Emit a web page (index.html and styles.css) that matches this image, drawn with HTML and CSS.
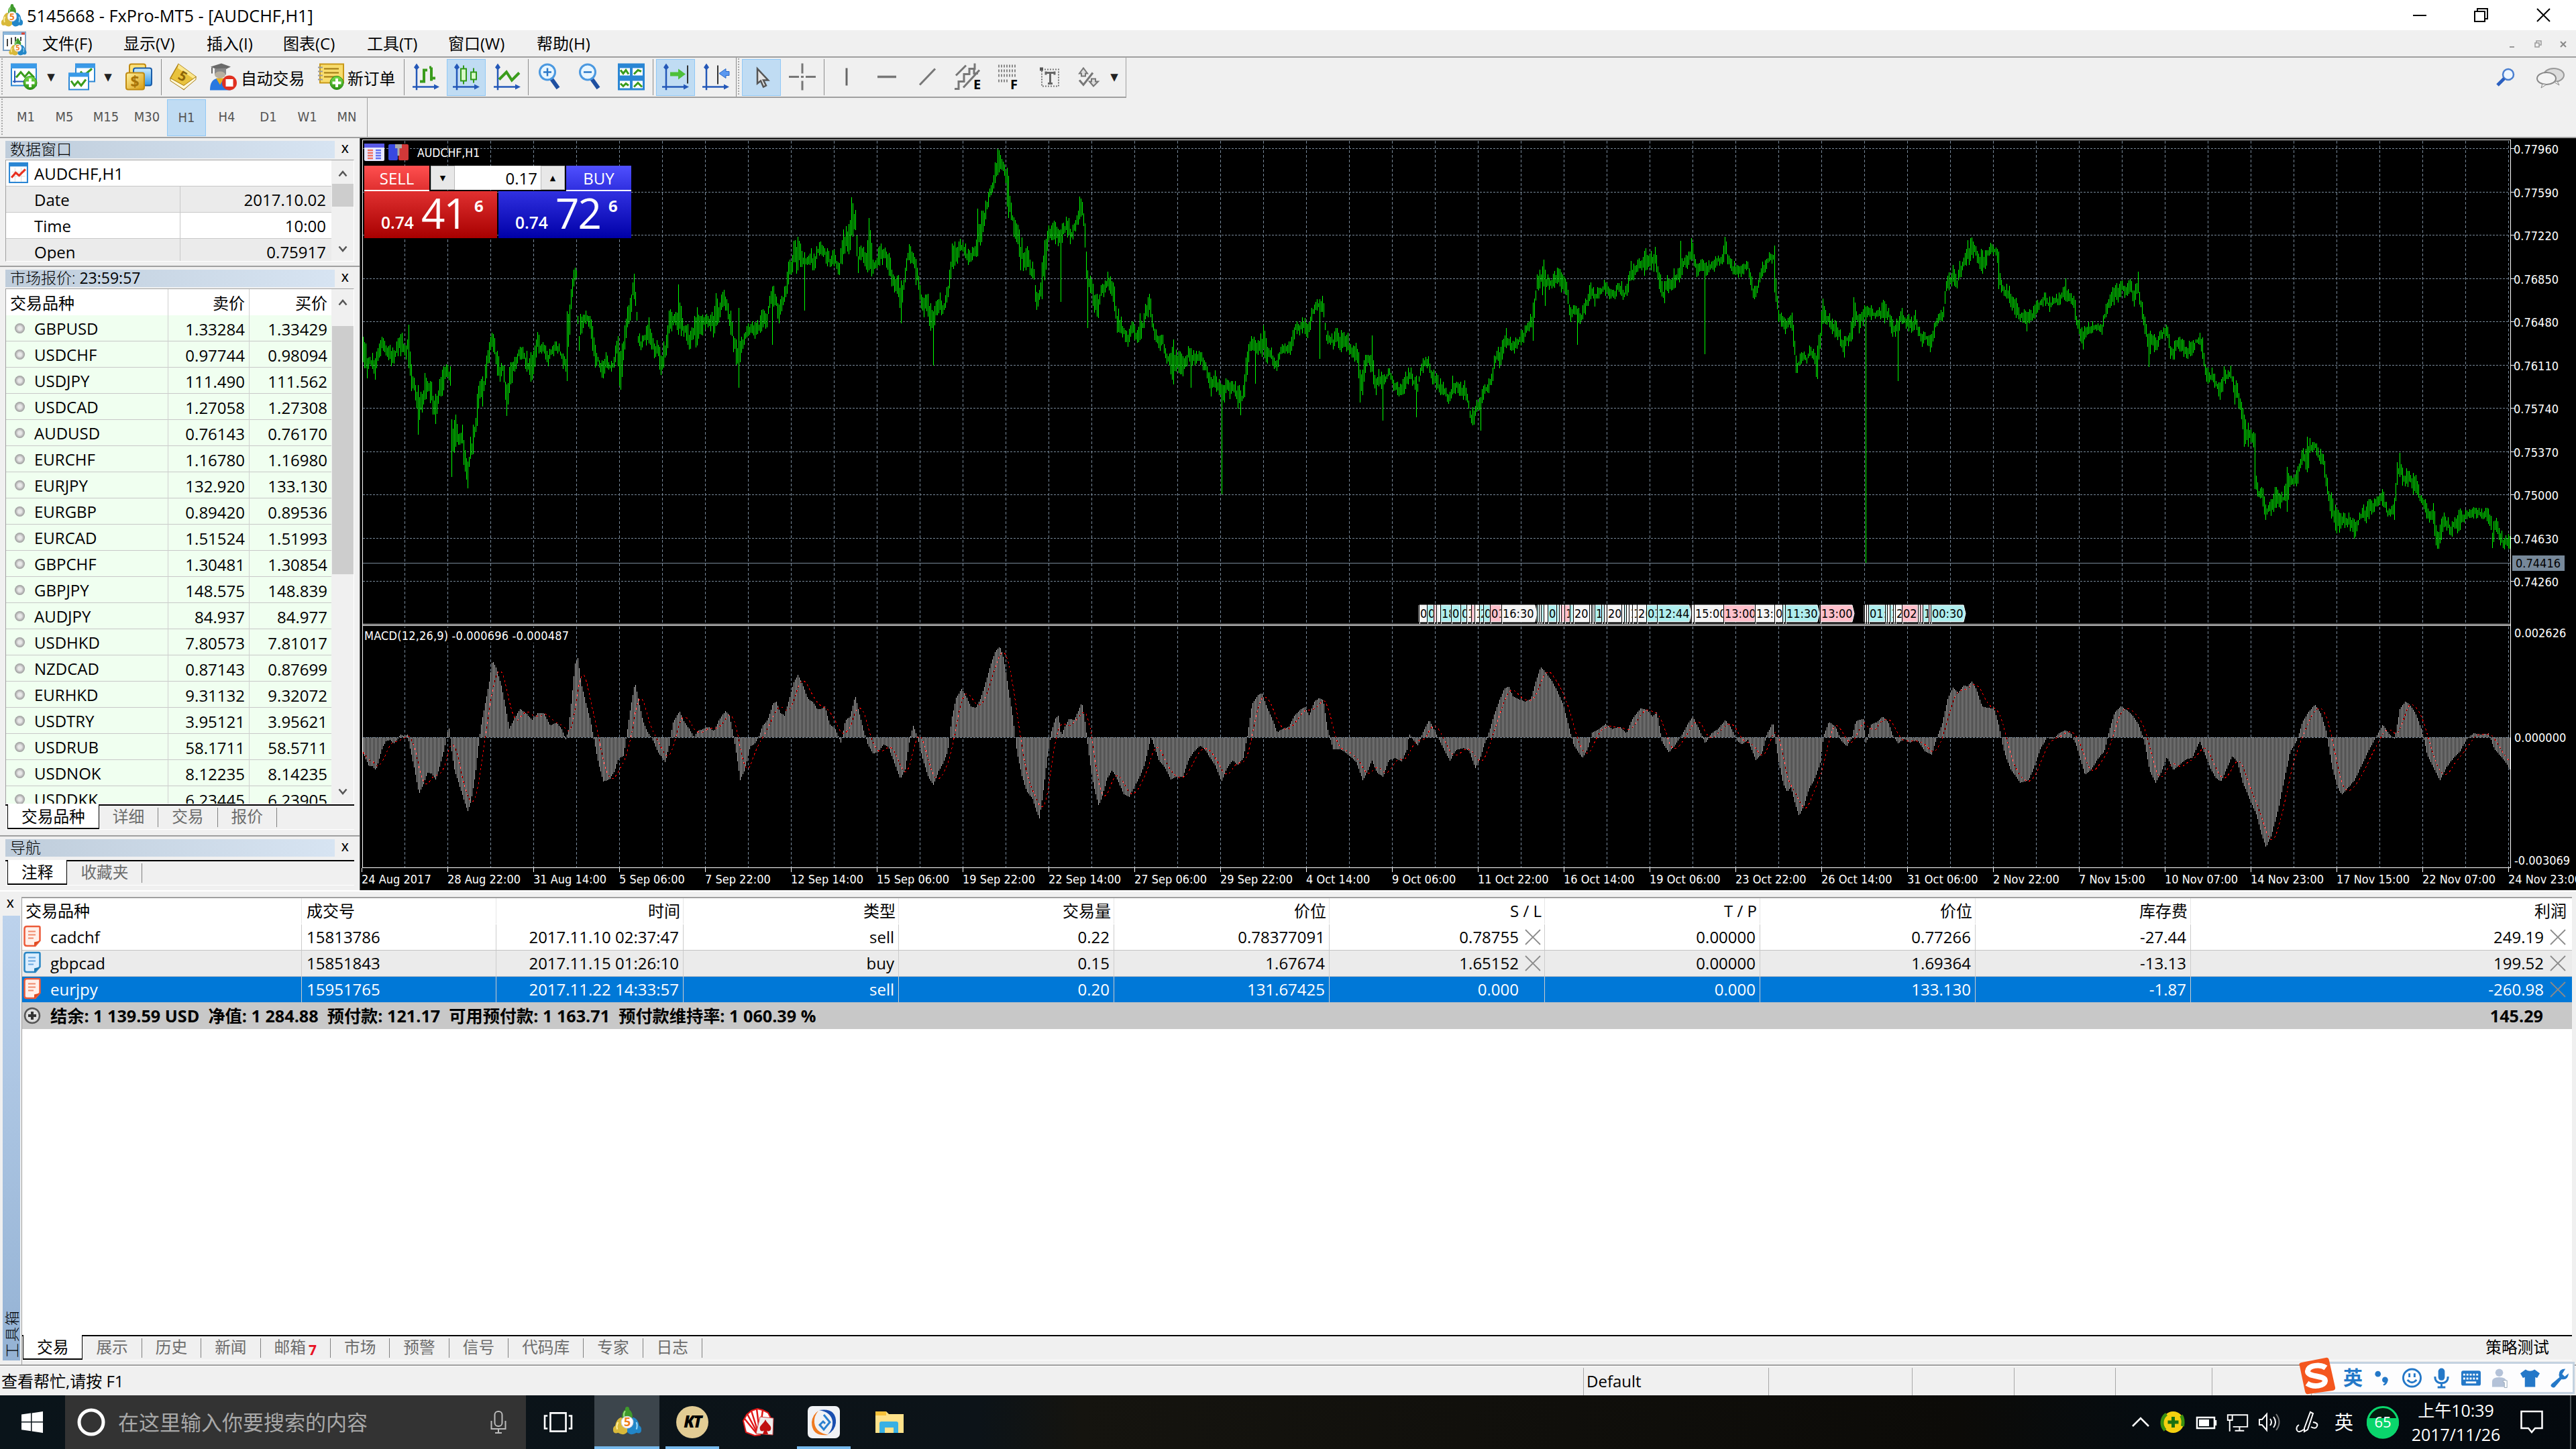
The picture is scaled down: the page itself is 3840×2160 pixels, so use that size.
FILE: index.html
```html
<!DOCTYPE html>
<html lang="zh-CN">
<head>
<meta charset="utf-8">
<title>5145668 - FxPro-MT5 - [AUDCHF,H1]</title>
<link rel="stylesheet" href="styles.css">
</head>
<body>
<svg class="defs" width="0" height="0">
  <defs>
    <linearGradient id="gGold" x1="0" y1="0" x2="1" y2="1"><stop offset="0" stop-color="#fff3a0"/><stop offset="1" stop-color="#d89a10"/></linearGradient>
    <linearGradient id="gGreen" x1="0" y1="0" x2="0" y2="1"><stop offset="0" stop-color="#7be04a"/><stop offset="1" stop-color="#2a8f12"/></linearGradient>
    <linearGradient id="gBlue" x1="0" y1="0" x2="0" y2="1"><stop offset="0" stop-color="#cfeeff"/><stop offset="1" stop-color="#2f96e8"/></linearGradient>
    <symbol id="mt5" viewBox="0 0 40 40">
      <path d="M17 4q0-4 3-4t3 4q6 5 4 13H13Q11 9 17 4z" fill="#3f9a2c"/>
      <path d="M17 6q-3 5-1 9" stroke="#9ade7c" stroke-width="2" fill="none"/>
      <path d="M11 15q-7 3-8 12-4 2-3 7t7 3q8 5 13-1V20z" fill="#d9b93a"/>
      <path d="M7 22q-3 5-1 10" stroke="#fff0a0" stroke-width="2" fill="none"/>
      <path d="M29 15q7 3 8 12 4 2 3 7t-7 3q-8 5-13-1V20z" fill="#2286c8"/>
      <path d="M33 22q2 5 0 10" stroke="#9ad8f8" stroke-width="2" fill="none"/>
      <circle cx="20" cy="22" r="8.500" fill="#fff" stroke="#ccd" stroke-width="1"/>
      <text x="20" y="28" font-size="17" font-weight="700" text-anchor="middle" fill="#f08020">5</text>
    </symbol>
    <symbol id="plus" viewBox="0 0 22 22"><circle cx="11" cy="11" r="10" fill="url(#gGreen)" stroke="#2b8a18"/><path d="M11 4.500v13M4.500 11h13" stroke="#fff" stroke-width="4"/></symbol>
    <symbol id="axes" viewBox="0 0 40 40"><path d="M6 3v37M0 35h36" stroke="#2458b8" stroke-width="2.500" fill="none"/><path d="M6 0l4 6-4 4-4-4zM40 35l-8-4v8z" fill="#2458b8"/></symbol>
    <symbol id="sellDoc" viewBox="0 0 26 32"><path d="M5 1.500h18q1.500 0 1.500 2v19l-7 8H5q-3.500 0-3.500-3V5q0-3.500 3.500-3.500z" fill="#fff0ea" stroke="#ec5b3a" stroke-width="2.500"/><path d="M7 9h11M7 14h11M7 19h8" stroke="#f08a6c" stroke-width="2.200"/><path d="M24 23l-8 8v-6z" fill="#e04a20"/></symbol>
    <symbol id="buyDoc" viewBox="0 0 26 32"><path d="M5 1.500h18q1.500 0 1.500 2v19l-7 8H5q-3.500 0-3.500-3V5q0-3.500 3.500-3.500z" fill="#dceeff" stroke="#2a86c4" stroke-width="2.500"/><path d="M7 9h11M7 14h11M7 19h8" stroke="#6aa8e0" stroke-width="2.200"/><path d="M24 23l-8 8v-6z" fill="#1a78b0"/></symbol>
    <symbol id="cross" viewBox="0 0 26 26"><path d="M2 2l22 22M24 2L2 24" stroke="#8a8a8a" stroke-width="1.800"/></symbol>
    <symbol id="up" viewBox="0 0 14 10"><path d="M1.500 8.500L7 2l5.500 6.500" fill="none" stroke="#555" stroke-width="2.500"/></symbol>
    <symbol id="down" viewBox="0 0 14 10"><path d="M1.500 1.500L7 8l5.500-6.500" fill="none" stroke="#555" stroke-width="2.500"/></symbol>
  </defs>
</svg>

<header class="titlebar">
  <svg class="app-icon" viewBox="0 0 40 40" preserveAspectRatio="none"><use href="#mt5"/></svg>
  <span class="title">5145668 - FxPro-MT5 - [AUDCHF,H1]</span>
  <div class="winbtns">
    <svg viewBox="0 0 92 44"><path d="M36 22h20" stroke="#000" stroke-width="2"/></svg>
    <svg viewBox="0 0 92 44"><path d="M36 16h15v15H36zM40 16v-4h15v15h-4" fill="none" stroke="#000" stroke-width="2"/></svg>
    <svg viewBox="0 0 92 44"><path d="M37 12l19 19M56 12L37 31" stroke="#000" stroke-width="2"/></svg>
  </div>
</header>

<nav class="menubar">
  <svg class="mdi-icon" viewBox="0 0 36 36"><rect x="1" y="1" width="33" height="27" fill="#fff" stroke="#7aa0c4" stroke-width="2"/><path d="M1 3h33" stroke="#8db8dc" stroke-width="4"/><path d="M28 3h5" stroke="#e04030" stroke-width="3"/><path d="M7 22V11m6 8V9m6 6V8m8 6V8" stroke="#444" stroke-width="2"/><use href="#mt5" x="9" y="10" width="27" height="26"/></svg>
  <span style="width:121px">文件(F)</span><span style="width:124px">显示(V)</span><span style="width:114px">插入(I)</span><span style="width:125px">图表(C)</span><span style="width:121px">工具(T)</span><span style="width:132px">窗口(W)</span><span>帮助(H)</span>
  <div class="mdibtns"><svg viewBox="0 0 38 38"><path d="M15 24h7" stroke="#999" stroke-width="2"/></svg><svg viewBox="0 0 38 38"><path d="M15 18h6v6h-6zM17 18v-3h7v6h-3" fill="none" stroke="#999" stroke-width="1.500"/></svg><svg viewBox="0 0 38 38"><path d="M15 16l8 8M23 16l-8 8" stroke="#888" stroke-width="2"/></svg></div>
</nav>

<div class="toolbar">
  <div class="tools">
    <i class="grip"></i>
    <b style="width:56px"><svg viewBox="0 0 40 40"><rect x="1" y="1" width="37" height="32" fill="#fff" stroke="#2a86d4" stroke-width="2"/><path d="M0 4h39" stroke="#3a9ae8" stroke-width="7"/><path d="M6 11v18M3 27h20" stroke="#2458b8" stroke-width="2"/><path d="M8 21l7-8 6 7 6-7 8 8" fill="none" stroke="#3a9c1c" stroke-width="3"/><use href="#plus" x="18" y="18" width="22" height="22"/></svg></b>
    <b class="caret" style="width:24px">▼</b>
    <b style="width:68px"><svg viewBox="0 0 40 40"><rect x="11" y="1" width="28" height="26" fill="#fff" stroke="#2a86d4" stroke-width="2"/><path d="M10 4h30" stroke="#3a9ae8" stroke-width="6"/><path d="M18 12l5 6 12-10" fill="none" stroke="#3a9c1c" stroke-width="3"/><rect x="1" y="15" width="29" height="24" fill="#fff" stroke="#2a86d4" stroke-width="2"/><path d="M0 17h31" stroke="#3a9ae8" stroke-width="6"/><path d="M4 26l5 7 5-6 5 6 7-9" fill="none" stroke="#3a9c1c" stroke-width="3"/></svg></b>
    <b class="caret" style="width:10px">▼</b>
    <b class="money"><svg viewBox="0 0 40 40"><rect x="6" y="1" width="24" height="30" rx="3" fill="#ffe27a" stroke="#c08a10" stroke-width="2"/><rect x="12" y="7" width="27" height="26" rx="3" fill="url(#gBlue)" stroke="#1a5ca8" stroke-width="2"/><rect x="1" y="14" width="27" height="25" rx="3" fill="url(#gGold)" stroke="#c08a10" stroke-width="2"/><text x="14" y="35" font-size="23" font-weight="700" fill="#a87408" text-anchor="middle">$</text></svg></b>
    <i class="sep"></i>
    <b style="width:64px"><svg viewBox="0 0 40 40"><path d="M13 1l26 19-18 19L1 22z" fill="#e8c23c" stroke="#a87c10" stroke-width="1.500"/><path d="M13 1l26 19-2 4L12 7z" fill="#fbe68c"/><path d="M1 22l20 11 18-13v4L21 39 1 26z" fill="#fff8d8" stroke="#a87c10"/><text x="19" y="26" font-size="20" font-weight="700" fill="#8c6408" text-anchor="middle" transform="rotate(30 19 20)">5</text></svg></b>
    <b style="width:56px"><svg viewBox="0 0 40 40"><path d="M1 5L17 0l14 5-14 7z" fill="#6a6a6a"/><path d="M7 8v9h17V7" fill="#888"/><path d="M3 6v9" stroke="#666" stroke-width="2"/><ellipse cx="15" cy="17" rx="8" ry="5" fill="#b8b0a0"/><path d="M0 40q0-18 14-18t17 18z" fill="#2878e0"/><path d="M9 22l6 10 6-10z" fill="#e8b020"/><circle cx="29" cy="29" r="11" fill="#e03020"/><rect x="23.500" y="23.500" width="11" height="11" fill="#fff"/></svg></b>
    <b class="lbl auto">自动交易</b>
    <b style="width:50px"><svg viewBox="0 0 40 40"><rect x="4" y="1" width="35" height="28" fill="#f8dc6c" stroke="#c89818" stroke-width="2"/><path d="M10 8h22M10 14h22M10 20h22" stroke="#a07810" stroke-width="2"/><path d="M1 6h7M1 12h7M1 18h7M1 24h7" stroke="#999" stroke-width="2"/><use href="#plus" x="18" y="18" width="22" height="22"/></svg></b>
    <b class="lbl" style="width:84px">新订单</b>
    <i class="sep"></i>
    <b style="width:63px"><svg viewBox="0 0 40 40"><use href="#axes"/><path d="M11 27h6V10h5M28 6v20M28 6h-3m3 16h6" stroke="#3a9c1c" stroke-width="4" fill="none"/></svg></b>
    <b class="on"><svg viewBox="0 0 40 40"><use href="#axes"/><path d="M16 3v28M31 7v22" stroke="#2f9818" stroke-width="2"/><rect x="12" y="8" width="8" height="18" fill="#d8f8c8" stroke="#2f9818" stroke-width="2"/><rect x="27" y="13" width="8" height="11" fill="#d8f8c8" stroke="#2f9818" stroke-width="2"/></svg></b>
    <b style="width:63px"><svg viewBox="0 0 40 40"><use href="#axes"/><path d="M8 24l11-11 8 12 11-11" fill="none" stroke="#3a9c1c" stroke-width="4"/></svg></b>
    <i class="sep"></i>
    <b style="width:63px"><svg viewBox="0 0 40 40"><path d="M22 23l10 14" stroke="#1f4fa0" stroke-width="6"/><circle cx="16" cy="13" r="11.500" fill="#e8f6ff" stroke="#4a98e0" stroke-width="3"/><path d="M16 7v12M10 13h12" stroke="#2a78c8" stroke-width="2.500"/></svg></b>
    <b style="width:58px"><svg viewBox="0 0 40 40"><path d="M22 23l10 14" stroke="#1f4fa0" stroke-width="6"/><circle cx="16" cy="13" r="11.500" fill="#e8f6ff" stroke="#4a98e0" stroke-width="3"/><path d="M10 13h12" stroke="#2a78c8" stroke-width="2.500"/></svg></b>
    <b style="width:64px"><svg viewBox="0 0 40 40"><path d="M0 0h40v40H0z" fill="#2a86d4"/><path d="M3 7h15v11H3zM22 7h15v11H22zM3 26h15v11H3zM22 26h15v11H22z" fill="#fff"/><path d="M4 10l4 5 4-5 4 6M24 16l6-6 5 2M4 30l4 4 4-4 4 3M24 35l6-6 6 6" fill="none" stroke="#3a9c1c" stroke-width="3"/></svg></b>
    <i class="sep"></i>
    <b class="on shift"><svg viewBox="0 0 40 40"><use href="#axes"/><path d="M38 3v27" stroke="#333" stroke-width="2"/><path d="M12 13h12V8l11 8-11 8v-5H12z" fill="#4ec03a"/></svg></b>
    <b style="width:61px"><svg viewBox="0 0 40 40"><use href="#axes"/><path d="M23 3v28" stroke="#333" stroke-width="2"/><path d="M40 12h-5V8l-10 7 10 7v-4h5z" fill="#5a98f0" stroke="#2a68c8"/></svg></b>
    <i class="sep full"></i><i class="grip"></i>
    <b class="on"><svg viewBox="0 0 40 40"><path d="M14 8v22l5-4 4 9 4-2-4-8h7z" fill="#e4e4e4" stroke="#555" stroke-width="2.500"/></svg></b>
    <b style="width:64px"><svg viewBox="0 0 40 40"><path d="M20 0v15M20 26v14M0 20h15M25 20h15M18 20h4" stroke="#777" stroke-width="3"/></svg></b>
    <i class="sep"></i>
    <b style="width:66px"><svg viewBox="0 0 40 40"><path d="M20 7v26" stroke="#666" stroke-width="3"/></svg></b>
    <b style="width:54px"><svg viewBox="0 0 40 40"><path d="M6 20h28" stroke="#777" stroke-width="3.500"/></svg></b>
    <b style="width:66px"><svg viewBox="0 0 40 40"><path d="M9 32L32 8" stroke="#777" stroke-width="3"/></svg></b>
    <b style="width:54px"><svg viewBox="0 0 40 40"><path d="M3 18L18 3M14 36L38 10M1 38h6V27h8V16h8V8h8V0M30 8v7h6" fill="none" stroke="#777" stroke-width="3"/><text x="29" y="38" font-size="20" font-weight="700">E</text></svg></b>
    <b style="width:68px"><svg viewBox="0 0 40 40"><path d="M5 4h28M5 11h28M5 18h28M5 26h16" stroke="#888" stroke-width="4" stroke-dasharray="2 2"/><text x="23" y="38" font-size="20" font-weight="700">F</text></svg></b>
    <b style="width:56px"><svg viewBox="0 0 40 40"><rect x="8" y="9" width="25" height="25" fill="none" stroke="#777" stroke-width="2" stroke-dasharray="2 2"/><rect x="5" y="6" width="5" height="5" fill="#555"/><path d="M13 14h15M20.500 14v16M17 30h7M14 12v5M27 12v5" stroke="#666" stroke-width="3"/></svg></b>
    <b style="width:60px"><svg viewBox="0 0 40 40"><path d="M6 15l6-8 6 8h-3v4H9v-4zM24 27v-4h6v4h4l-7 7-6-7z" fill="#ddd" stroke="#777" stroke-width="2"/><path d="M6 25l6 7 14-18" fill="none" stroke="#777" stroke-width="3"/></svg></b>
    <b class="caret" style="width:16px">▼</b>
  </div>
  <svg class="find" viewBox="0 0 40 40"><circle cx="23" cy="15" r="8" fill="#eef6ff" stroke="#4a7fd0" stroke-width="2.500"/><path d="M17 21L7 31" stroke="#2a5fc0" stroke-width="5"/></svg>
  <svg class="chat" viewBox="0 0 48 40"><ellipse cx="29" cy="16" rx="15" ry="10" fill="#dcdcdc" stroke="#999" stroke-width="2"/><ellipse cx="18" cy="21" rx="14" ry="9" fill="#f4f4f4" stroke="#888" stroke-width="2"/><path d="M12 29l-2 6 8-5zM34 25l3 6-8-5z" fill="#f0f0f0" stroke="#888"/></svg>
</div>

<div class="frames">
  <div class="frame-list"><i class="grip"></i><b style="width:61px">M1</b><b style="width:54px">M5</b><b style="width:70px">M15</b><b style="width:56px;padding-right:4px">M30</b><b class="on">H1</b><b style="width:62px">H4</b><b style="width:62px">D1</b><b style="width:54px">W1</b><b style="width:64px">MN</b></div>
</div>

<main class="workspace">
  <aside class="side">
    <section class="pane data">
      <h3>数据窗口<em>X</em></h3>
      <div class="frame-box">
        <div class="rows">
          <div class="dhead"><svg viewBox="0 0 28 30"><rect x="1" y="1" width="26" height="28" fill="#fff" stroke="#2a86d4" stroke-width="2"/><path d="M0 3h28" stroke="#2a86d4" stroke-width="6"/><path d="M4 14h20M4 20h20M9 8v20M18 8v20" stroke="#ddd"/><path d="M4 22l6-7 5 4 9-9" stroke="#e83020" stroke-width="3" fill="none"/></svg>AUDCHF,H1</div>
          <div class="drow alt"><span>Date</span><span>2017.10.02</span></div>
          <div class="drow"><span>Time</span><span>10:00</span></div>
          <div class="drow alt"><span>Open</span><span>0.75917</span></div>
        </div>
        <div class="scroll"><svg><use href="#up"/></svg><i style="height:34px"></i><svg class="end"><use href="#down"/></svg></div>
      </div>
    </section>
    <section class="pane market">
      <h3>市场报价: <span>23:59:57</span><em>X</em></h3>
      <div class="frame-box">
        <div class="rows" id="quotes"><div class="qhead"><span>交易品种</span><span>卖价</span><span>买价</span></div></div>
        <div class="scroll"><svg><use href="#up"/></svg><i style="height:370px;margin-top:30px"></i><svg class="end"><use href="#down"/></svg></div>
      </div>
      <div class="tabs"><b>交易品种</b><a>详细</a><a>交易</a><a>报价</a></div>
    </section>
    <section class="pane navi">
      <h3>导航<em>X</em></h3>
      <div class="tabs"><b>注释</b><a>收藏夹</a></div>
    </section>
  </aside>

  <div class="chart">
    <svg id="plot" viewBox="536 204 3304 1123"></svg>
    <div class="trade">
      <div class="t-icons">
        <svg viewBox="0 0 30 26"><rect width="30" height="26" rx="2" fill="#e8e8ff"/><rect width="30" height="6" fill="#5a5ae8"/><path d="M5 10h8M5 14h8M5 18h8M5 22h8" stroke="#f07060" stroke-width="2.500"/><path d="M17 10h8M17 14h8M17 18h8M17 22h8" stroke="#6070f0" stroke-width="2.500"/></svg>
        <svg viewBox="0 0 30 26"><rect y="1" width="14" height="24" rx="2" fill="#3848e0"/><rect x="15" y="1" width="15" height="24" rx="2" fill="#d03838"/><path d="M10 1h10v6h-3.500v11h-3V7H10z" fill="#aaa"/></svg>
        <span>AUDCHF,H1</span>
      </div>
      <div class="t-top"><div class="sell">SELL</div><div class="spin"><u>▼</u><span>0.17</span><u>▲</u></div><div class="buy">BUY</div></div>
      <div class="t-bot"><div class="sell"><small>0.74</small><big>41</big><sup>6</sup></div><div class="buy"><small>0.74</small><big>72</big><sup>6</sup></div></div>
    </div>
  </div>
</main>

<section class="toolbox">
  <div class="strip"><em>X</em><div>工具箱</div></div>
  <div class="deals">
    <div class="table">
      <div class="tr th"><span>交易品种</span><span>成交号</span><span>时间</span><span>类型</span><span>交易量</span><span>价位</span><span>S / L</span><span>T / P</span><span>价位</span><span>库存费</span><span>利润</span></div>
      <div class="tr"><span><svg><use href="#sellDoc"/></svg>cadchf</span><span>15813786</span><span>2017.11.10 02:37:47</span><span>sell</span><span>0.22</span><span>0.78377091</span><span class="x">0.78755<svg><use href="#cross"/></svg></span><span>0.00000</span><span>0.77266</span><span>-27.44</span><span class="x">249.19<svg><use href="#cross"/></svg></span></div>
      <div class="tr alt"><span><svg><use href="#buyDoc"/></svg>gbpcad</span><span>15851843</span><span>2017.11.15 01:26:10</span><span>buy</span><span>0.15</span><span>1.67674</span><span class="x">1.65152<svg><use href="#cross"/></svg></span><span>0.00000</span><span>1.69364</span><span>-13.13</span><span class="x">199.52<svg><use href="#cross"/></svg></span></div>
      <div class="tr sel"><span><svg><use href="#sellDoc"/></svg>eurjpy</span><span>15951765</span><span>2017.11.22 14:33:57</span><span>sell</span><span>0.20</span><span>131.67425</span><span class="x">0.000<svg></svg></span><span>0.000</span><span>133.130</span><span>-1.87</span><span class="x">-260.98<svg><use href="#cross"/></svg></span></div>
      <div class="sum"><svg viewBox="0 0 26 26"><circle cx="13" cy="13" r="11" fill="#ddd" stroke="#555" stroke-width="2.500"/><path d="M13 7v12M7 13h12" stroke="#333" stroke-width="4"/></svg><span>结余: 1 139.59 USD&nbsp; 净值: 1 284.88&nbsp; 预付款: 121.17&nbsp; 可用预付款: 1 163.71&nbsp; 预付款维持率: 1 060.39 %</span><span>145.29</span></div>
    </div>
    <div class="tabs"><b>交易</b><a>展示</a><a>历史</a><a>新闻</a><a>邮箱<strong>7</strong></a><a>市场</a><a>预警</a><a>信号</a><a>代码库</a><a>专家</a><a>日志</a><q>策略测试</q></div>
  </div>
</section>

<footer class="status"><span style="width:2361px">查看帮忙,请按 F1</span><span style="width:276px">Default</span><span style="width:214px"></span><span style="width:152px"></span><span style="width:151px"></span><span style="width:144px"></span><span style="width:148px"></span></footer>

<div class="ime">
  <svg class="sogou" viewBox="0 0 56 54"><path d="M3 12Q1 8 6 7L42 0q4-1 5 4l9 40q1 4-4 5L16 54q-4 1-5-4z" fill="#f4561e"/><path d="M42 15C34 9 16 11 15 20s26 6 26 14-17 11-27 4" fill="none" stroke="#fff" stroke-width="8"/></svg>
  <b>英</b>
  <svg viewBox="0 0 30 32"><circle cx="8" cy="10" r="4.500"/><circle cx="19" cy="19" r="4.500"/><path d="M23 18q1 7-6 10l-1-2q4-2 4-6z"/></svg>
  <svg viewBox="0 0 30 32"><circle cx="15" cy="16" r="13.500" fill="none" stroke="#2478c8" stroke-width="3"/><path d="M11 9v6M19 9v6" stroke="#2478c8" stroke-width="3"/><path d="M8 19q7 8 14 0" fill="none" stroke="#2478c8" stroke-width="3"/></svg>
  <svg viewBox="0 0 30 32"><rect x="10" y="1" width="10" height="19" rx="5"/><path d="M5 14q0 10 10 10t10-10M15 24v6M9 30.500h12" fill="none" stroke="#2478c8" stroke-width="3"/></svg>
  <svg viewBox="0 0 30 32"><rect x="0" y="5" width="30" height="23" rx="3"/><path d="M3 11h24M3 17h24" stroke="#fff" stroke-width="3" stroke-dasharray="3 2"/><path d="M7 23h16" stroke="#fff" stroke-width="3"/></svg>
  <svg viewBox="0 0 30 32"><circle cx="13" cy="8" r="6" fill="#b4c2d8"/><path d="M2 30V22q0-7 11-7t11 7v8z" fill="#b4c2d8"/><path d="M19 20h6v11h-4V23h-2z" fill="#fff" stroke="#9ab"/></svg>
  <svg viewBox="0 0 30 32"><path d="M8 3q7 5 14 0l8 6-4 7-3-1v15H7V15l-3 1-4-7z"/></svg>
  <svg viewBox="0 0 30 32"><path d="M24 2q-10 0-10 9 0 2 1 4L3 25q-3 3 0 5t5 0L18 18q10 2 11-9l-6 5-4-4z"/></svg>
</div>

<div class="taskbar">
  <svg class="start" viewBox="0 0 32 32"><path d="M0 4.500L14 2.600V15H0zM15.500 2.400L32 0v15H15.500zM0 16.500h14v12.800L0 27.300zM15.500 16.500H32V32l-16.500-2.400z" fill="#fff"/></svg>
  <div class="search"><svg viewBox="0 0 44 44"><circle cx="22" cy="22" r="18" fill="none" stroke="#fff" stroke-width="5"/></svg><span>在这里输入你要搜索的内容</span><svg class="mic" viewBox="0 0 24 34"><rect x="6.500" y="1" width="11" height="22" rx="5" fill="none" stroke="#bbb" stroke-width="2"/><path d="M1.500 15v12h21V15M12 27v6M7 33h10" fill="none" stroke="#bbb" stroke-width="2"/></svg></div>
  <div class="task view"><svg viewBox="0 0 40 40"><path d="M9 7h22v26H9zM5 11H1v18h4M35 11h4v18h-4" fill="none" stroke="#fff" stroke-width="2.500"/></svg></div>
  <div class="task active"><svg viewBox="0 0 40 40"><use href="#mt5"/></svg></div>
  <div class="task run"><svg class="lg" viewBox="0 0 48 48"><circle cx="24" cy="24" r="24" fill="#e2cc94"/><text x="24" y="32" font-size="24" font-weight="900" font-style="italic" text-anchor="middle" letter-spacing="-2">KT</text></svg></div>
  <div class="task"><svg class="lg" viewBox="0 0 48 48"><path d="M2 22l5-9 7-6 9-3 8 2 8 4 4 8-16 25-8 1-13-5z" fill="#fff" stroke="#e01818" stroke-width="2"/><path d="M4 19l18 22M8 12l15 28M14 7l10 32M22 4l4 33M31 6l-4 30" stroke="#e01818" stroke-width="2.500"/><path d="M21 41l6-25 20 2-1 25z" fill="#eee" stroke="#d04040"/><path d="M35 20c3 7 10 9 8 15-2 4-6 2-6 1l2 6h-8l2-6c0 1-5 3-6-1-2-6 5-8 8-15z" fill="#c01010"/></svg></div>
  <div class="task run"><svg class="lg" viewBox="0 0 48 48"><rect width="48" height="48" rx="7" fill="#f0f2f5"/><path d="M17 6q26-4 25 19-1 11-12 17 8-8 7-19Q35 9 17 6z" fill="#1a4fb0"/><path d="M31 43q-25 3-25-19 1-11 10-17-7 8-6 18 2 15 21 18z" fill="#f07a20"/><path d="M24 13l9 11-9 11-6-7 5-5 3 3" fill="none" stroke="#2a80d0" stroke-width="3"/></svg></div>
  <div class="task"><svg class="lg" viewBox="0 0 48 48"><path d="M3 8h16l4 4h22v28H3z" fill="#ffe28a"/><path d="M3 8h16v6H3z" fill="#f8c23a"/><path d="M9 40V26q0-3 3-3h22q3 0 3 3v14h-7v-8H17v8z" fill="#38b0e4"/></svg></div>
  <div class="tray">
    <svg style="width:48px" viewBox="0 0 48 48"><path d="M12 30l12-12 12 12" fill="none" stroke="#fff" stroke-width="2.500"/></svg>
    <svg style="width:49px" viewBox="0 0 48 48"><circle cx="24" cy="24" r="16" fill="#f4d010"/><path d="M14 12a16 16 0 0 0-2 24M36 14q4 6 2 16" fill="none" stroke="#3a9010" stroke-width="5"/><path d="M24 16v16M16 24h16" stroke="#1a7010" stroke-width="5"/></svg>
    <svg style="width:48px" viewBox="0 0 48 48"><path d="M11 17h26v16H11zM39 21v8" fill="none" stroke="#fff" stroke-width="2.500"/><path d="M14 20h15v10H14z" fill="#fff"/></svg>
    <svg style="width:47px" viewBox="0 0 48 48"><path d="M17 13h22v18H17M27 31v6M20 37h14M9 13h7v8H9zM12 21v17" fill="none" stroke="#fff" stroke-width="2"/></svg>
    <svg style="width:48px" viewBox="0 0 48 48"><path d="M9 20h4l7-8v24l-7-8H9zM25 19q4 5 0 10M30 16q6 8 0 16" fill="none" stroke="#fff" stroke-width="2"/><path d="M34 12q9 12 0 24" fill="none" stroke="#777" stroke-width="2"/></svg>
    <svg style="width:64px" viewBox="0 0 48 48"><path d="M20 33L29 9l4 2-8 24-5 3zM12 28q-5 3-3 8t10-1M33 24q8 1 6 6t-9 1" fill="none" stroke="#fff" stroke-width="2"/></svg>
    <b>英</b>
    <svg class="gauge" viewBox="0 0 48 48"><circle cx="24" cy="24" r="22.500" fill="#05190f" stroke="#0ad66c" stroke-width="3"/><path d="M1 18a24 24 0 1 0 46 0z" fill="#0ad66c"/><text x="24" y="32" font-size="22" fill="#fff" text-anchor="middle">65</text></svg>
    <div class="clock"><span>上午10:39</span><span>2017/11/26</span></div>
    <svg class="note" viewBox="0 0 34 36"><path d="M1.500 2h31v25H22l-5 6-5-6H1.500z" fill="none" stroke="#fff" stroke-width="2.500"/></svg>
    <i></i>
  </div>
</div>
<script src="chart.js"></script>
</body>
</html>
```
FILE: styles.css
```css
* { box-sizing: border-box; }
body { margin: 0; width: 3840px; height: 2160px; overflow: hidden; display: flex; flex-direction: column; background: #f0f0f0; color: #000; font: 24px "Open Sans", "Noto Sans CJK SC", sans-serif; position: relative; }
svg { display: block; flex: none; overflow: visible; }
.defs { position: absolute; }
b, em, i, u, q, h3 { font-weight: 400; font-style: normal; text-decoration: none; quotes: none; margin: 0; }
q::before, q::after { content: none; }

.titlebar { height: 45px; flex: none; background: #fff; display: flex; align-items: center; padding-left: 2px; padding-right: 3px; }
.app-icon { width: 32px; height: 34px; margin-right: 6px; }
.title { flex: 1; white-space: pre; font-size: 25.300px; }
.winbtns { display: flex; }
.winbtns svg { width: 92px; height: 44px; }

.menubar { height: 41px; flex: none; display: flex; align-items: center; border-bottom: 2px solid #a0a0a0; }
.menubar span { white-space: nowrap; margin-top: -3px; }
.mdi-icon { width: 36px; height: 36px; margin: 0 23px 0 4px; }
.mdibtns { margin-left: auto; display: flex; }
.mdibtns svg { width: 38px; height: 38px; }

.toolbar { height: 60px; flex: none; display: flex; align-items: center; }
.tools { display: flex; height: 60px; width: 1679px; align-items: center; border-right: 1px solid #a0a0a0; border-bottom: 2px solid #a0a0a0; }
.tools b { flex: none; height: 55px; display: flex; align-items: center; justify-content: center; white-space: nowrap; }
.tools b svg { width: 40px; height: 41px; margin-top: -1px; }
.tools b.caret { font: 15px "DejaVu Sans", sans-serif; color: #222; }
.tools b.lbl { justify-content: flex-start; font-size: 23.800px; }
.tools b.auto { width: 109px; margin-left: -2px; }
.tools b.money { width: 44px; margin: 0 11px 0 19px; }
.tools b.on, .frame-list b.on { width: 58px; background: #c0dcf3; border: 1px solid #90c8f6; }
.tools b.shift { margin-left: 4px; }
.sep { width: 1px; height: 54px; background: #8c8c8c; flex: none; }
.sep.full { height: 58px; }
.grip { flex: none; width: 8px; height: 56px; background: repeating-linear-gradient(#a8a8a8 0 2px, transparent 2px 4px) 2px 0 / 2px 100% no-repeat; }
.find { width: 40px; height: 40px; margin-left: auto; margin-right: 22px; }
.chat { width: 48px; height: 40px; margin-right: 14px; }

.frames { height: 58px; flex: none; display: flex; }
.frame-list { display: flex; align-items: center; width: 548px; border-right: 1px solid #a0a0a0; }
.frame-list b { text-align: center; line-height: 53px; height: 55px; color: #555; font-family: "DejaVu Sans Condensed", "Noto Sans", sans-serif; font-size: 20px; flex: none; }

.workspace { height: 1123px; flex: none; display: flex; border-top: 2px solid #a0a0a0; }
.side { width: 536px; display: flex; flex-direction: column; }
.pane { position: relative; border-bottom: 2px solid #a0a0a0; padding: 4px 8px 0 8px; }
.pane h3 { height: 26px; line-height: 24px; width: 491px; background: linear-gradient(90deg, #bfcddb, #d7e4f2); font-size: 23px; font-weight: 300; padding-left: 7px; margin-bottom: 2px; position: relative; }
.pane h3 span { font-weight: 400; }
.pane h3 em { position: absolute; left: 501px; top: 0; font: 600 17px/24px "Open Sans", sans-serif; }
.frame-box { border: 1px solid #a0a0a0; border-bottom-color: #fff; border-right-color: #fff; width: 520px; display: flex; overflow: hidden; background: #f0f0f0; }
.rows { width: 485px; background: #fff; flex: none; overflow: hidden; }
.scroll { flex: 1; display: flex; flex-direction: column; align-items: center; padding: 14px 0 13px; }
.scroll svg { width: 14px; height: 10px; margin-top: 1px; }
.scroll i { width: 32px; background: #cdcdcd; margin-top: 10px; }
.scroll .end { margin-top: auto; }
.data { height: 192px; }
.data .frame-box { height: 152px; }
.dhead { height: 39px; line-height: 39px; display: flex; padding-left: 4px; border-bottom: 1px solid #c8c8c8; }
.dhead svg { width: 29px; height: 31px; margin: 3px 9px 0 0; }
.drow { height: 39px; line-height: 39px; border-bottom: 1px solid #c8c8c8; display: grid; grid-template-columns: 260px 1fr; }
.drow span:first-child { padding-left: 42px; border-right: 1px solid #c8c8c8; }
.drow span:last-child { text-align: right; padding-right: 8px; }
.alt { background: #ebebeb; }
.market { height: 849px; }
.market .frame-box { height: 769px; }
.qhead, .qrow { display: grid; grid-template-columns: 242px 121px 122px; height: 39px; line-height: 41px; }
.qrow { background: #f0fff0; border-bottom: 1px solid #c8c8c8; }
.qhead span, .qrow span { border-right: 1px solid #d0d0d0; text-align: right; padding-right: 6px; height: 39px; }
.qhead span:last-child, .qrow span:last-child { border-right: 0; }
.qhead span:first-child, .qrow span:first-child { text-align: left; padding-left: 6px; }
.qrow span:first-child { display: flex; align-items: center; }
.qrow i { width: 15px; height: 15px; border-radius: 50%; background: radial-gradient(#e8e8e8 25%, #909090 75%); margin: 0 14px 0 7px; }
.tabs { display: flex; border-top: 2px solid #000; height: 38px; border-bottom: 1px solid #fff; color: #6c6c6c; padding-left: 3px; font-size: 23.700px; }
.tabs b { color: #000; background: #fff; border: 1px solid #000; border-top: 0; border-bottom-width: 2px; margin-top: -2px; padding: 0 20px; height: 37px; line-height: 36px; }
.tabs a { position: relative; padding: 0 20px; border-right: 1px solid #808080; height: 29px; margin-top: 3px; line-height: 26px; }
.navi { height: 80px; border-bottom: 0; }
.navi h3 { margin-bottom: 5px; }

.chart { flex: 1; position: relative; background: #000; border-left: 1px solid #555; margin-right: 2px; }
#plot { width: 3304px; height: 1123px; margin: -2px 0 0 -1px; font: 18px "DejaVu Sans Condensed", "Noto Sans", sans-serif; fill: #fff; }
.trade { position: absolute; left: 6px; top: 8px; width: 398px; color: #fff; }
.t-icons { display: flex; gap: 6px; height: 33px; font: 17.500px/28px "DejaVu Sans Condensed", "Noto Sans", sans-serif; }
.t-icons svg { width: 30px; height: 26px; }
.t-icons span { margin-left: 7px; }
.t-top { display: flex; gap: 2px; height: 38px; text-align: center; line-height: 37px; }
.t-top > div { height: 38px; flex: 1; }
.t-top .sell, .t-top .buy { border-bottom: 2px solid; }
.sell { background: linear-gradient(#ff5050, #e03030); border-color: #b01818; }
.buy { background: linear-gradient(#5050ff, #3030e0); border-color: #1818a8; }
.t-top .spin { flex: 0 0 200px; height: 36px; display: flex; background: #fff; color: #000; }
.spin u { width: 36px; background: #e8e8e8; font: 11px/35px "DejaVu Sans", sans-serif; border: 1px solid #bbb; }
.spin span { flex: 1; text-align: right; padding-right: 5px; }
.t-bot { display: flex; gap: 2px; }
.t-bot > div { flex: 1; height: 70px; display: flex; align-items: baseline; padding-left: 25px; line-height: 65px; position: relative; }
.t-bot .sell { background: linear-gradient(#e03030, #a80000); }
.t-bot .buy { background: linear-gradient(#3030e0, #0000a8); }
.t-bot small { font-size: 24.500px; font-weight: 600; width: 60px; }
.t-bot big { font-size: 62px; letter-spacing: -2px; }
.t-bot sup { position: absolute; left: 164px; top: 7px; font-size: 24px; font-weight: 700; line-height: 30px; }

.toolbox { height: 709px; flex: none; display: flex; border-top: 2px solid #fff; border-bottom: 2px solid #a0a0a0; padding-top: 8px; }
.strip { width: 32px; padding-left: 4px; display: flex; flex-direction: column; }
.strip em { font: 600 17px/20px "Open Sans", sans-serif; padding-left: 6px; height: 28px; }
.strip div { width: 26px; height: 663px; background: linear-gradient(0deg, #bcd2ec, #94b2d4); writing-mode: vertical-rl; text-orientation: sideways; transform: rotate(180deg); line-height: 26px; font-size: 22px; letter-spacing: 2px; font-weight: 300; padding-top: 4px; }
.deals { width: 3802px; border-left: 1px solid #a0a0a0; border-top: 2px solid #a0a0a0; display: flex; flex-direction: column; }
.table { height: 651px; background: #fff; }
.tr { display: grid; grid-template-columns: 417px 290px 279px 321px 321px 321px 321px 321px 321px 321px 1fr; height: 39px; line-height: 38px; border-bottom: 1px solid #c4c4c4; }
.tr > span { border-right: 1px solid #ccc; text-align: right; padding-right: 6px; }
.th > span { border-right-color: #e6e6e6; padding-right: 4px; }
.th { border-bottom-color: transparent; }
.tr > span:nth-child(-n+2) { text-align: left; padding-left: 7px; }
.tr > span:first-child { display: flex; align-items: center; padding-left: 5px; }
.tr > span:last-child { border: 0; padding-right: 8px; }
.tr > span:first-child svg { width: 26px; height: 33px; margin: 0 14px 3px -3px; }
.tr > span.x { display: flex; justify-content: flex-end; align-items: center; padding-right: 4px; }
.tr > span.x:last-child { padding-right: 8px; }
.x svg { width: 26px; height: 26px; margin-left: 8px; }
.sel { background: #0078d7; color: #fff; }
.sum { height: 39px; background: #c8c8c8; display: flex; align-items: center; font-weight: 700; font-size: 25.200px; line-height: 36px; padding: 0 43px 2px 2px; white-space: nowrap; }
.sum svg { width: 26px; height: 26px; margin-right: 14px; }
.sum span:last-child { margin-left: auto; }
.deals .tabs { padding-left: 1px; }
.deals .tabs q { margin-left: auto; margin-right: 34px; color: #000; line-height: 33px; }
.tabs strong { font-size: 21px; color: #e81123; margin: 0 0 0 4px; position: relative; top: 3px; }

.status { flex: 1; display: flex; border-top: 1px solid #fff; }
.status span { height: 41px; margin-top: 2px; border-right: 1px solid #a8a8a8; line-height: 40px; padding-left: 4px; }
.status span:first-child { padding-left: 2px; }
.ime { position: absolute; left: 3450px; top: 2030px; width: 388px; height: 48px; background: #fdfdfe; border: 3px solid #c4d2e0; display: flex; align-items: center; gap: 15px; padding-left: 40px; color: #2478c8; fill: #2478c8; }
.ime svg { width: 29px; height: 32px; }
.ime b { font-size: 29px; font-weight: 700; line-height: 40px; }
.ime .sogou { position: absolute; left: -28px; top: -9px; width: 56px; height: 54px; }

.taskbar { height: 80px; flex: none; background: linear-gradient(90deg, #0a141a, #0c1318 38%, #15140f 42%, #0c0b08 76%, #050c11 84%, #04090e); display: flex; align-items: center; color: #fff; }
.start { width: 32px; height: 32px; margin: 0 33px 0 32px; }
.search { width: 687px; height: 80px; background: #333; display: flex; align-items: center; color: #a8a8a8; font-size: 31px; }
.search span { margin-top: -3px; }
.search svg { width: 44px; height: 44px; margin: 0 18px 0 17px; }
.search .mic { width: 24px; height: 34px; margin: 0 29px 0 auto; }
.task { width: 98px; height: 80px; display: flex; align-items: center; justify-content: center; }
.task.view { width: 102px; padding-right: 7px; }
.task svg { width: 42px; height: 42px; }
.task svg.lg { width: 48px; height: 48px; }
.active { background: #3c454c; border-bottom: 4px solid #76b9ed; width: 97px; }
.run { background: linear-gradient(#76b9ed, #76b9ed) center bottom / 80px 4px no-repeat; }
.tray { margin-left: auto; display: flex; align-items: center; width: 673px; }
.tray svg { height: 48px; }
.tray b { font-size: 28px; width: 30px; line-height: 48px; margin-left: 9px; }
.gauge { width: 48px; margin: 0 15px 0 18px; }
.clock { width: 140px; display: flex; flex-direction: column; text-align: center; font-size: 25px; line-height: 36px; }
.tray .note { width: 34px; height: 36px; margin-left: 26px; }
.tray i { width: 2px; height: 80px; background: #4a5054; margin-left: 40px; }
```
FILE: chart.js
```js
// Deterministic noise so the bars look the same on every load.
let seed = 77;
const rnd = () => (seed = (seed * 16807) % 2147483647) / 2147483647;

// Market watch rows.
const quotes = `GBPUSD 1.33284 1.33429,USDCHF 0.97744 0.98094,USDJPY 111.490 111.562,USDCAD 1.27058 1.27308,AUDUSD 0.76143 0.76170,EURCHF 1.16780 1.16980,EURJPY 132.920 133.130,EURGBP 0.89420 0.89536,EURCAD 1.51524 1.51993,GBPCHF 1.30481 1.30854,GBPJPY 148.575 148.839,AUDJPY 84.937 84.977,USDHKD 7.80573 7.81017,NZDCAD 0.87143 0.87699,EURHKD 9.31132 9.32072,USDTRY 3.95121 3.95621,USDRUB 58.1711 58.5711,USDNOK 8.12235 8.14235,USDDKK 6.23445 6.23905`;
document.getElementById('quotes').insertAdjacentHTML('beforeend', quotes.split(',').map(q => {
  const [n, a, b] = q.split(' ');
  return `<div class="qrow"><span><i></i>${n}</span><span>${a}</span><span>${b}</span></div>`;
}).join(''));

// Price envelope blocks: "x high low" triples in block units.
const price = [
  { ox: 540, k: 1.4255, pts: `0 645 700,8 680 770,12 710 765,17 695 735,24 700 765,29 700 770,33 675 720,42 645 690,52 665 700,64 680 730,72 665 700,80 620 690,88 655 705,97 640 700,100 640 750,103 720 810,112 780 830,118 800 920,124 790 900,136 760 825,145 780 840,152 820 890,156 830 920,162 790 850,172 745 805,180 730 765,187 735 790,190 900 1070,198 890 975,205 940 985,212 910 980,217 965 1055,223 1035 1115,229 970 1040,236 920 1010,242 850 940,250 770 820,256 765 850,262 720 800,268 670 730,274 630 690,280 640 700,286 690 750,292 730 780,299 710 760,307 790 885,314 730 800,320 695 760,326 705 750,333 660 705,343 675 720,352 700 760,358 700 770,366 660 740,371 605 690,378 660 690,385 660 700,393 690 740,400 665 710,409 650 690,417 665 690,425 680 730,433 705 770,437 570 700,441 490 600,448 427 480,455 430 450,459 640 700,464 550 640,470 550 600,480 570 600,487 570 640,493 650 740,500 690 730,510 705 780,516 690 740,524 720 750,534 710 740,541 610 720,548 700 800,554 650 730,560 570 650,568 540 610,575 445 510,581 480 560,586 630 680,592 640 680,600 620 660,609 590 655,617 640 700,627 660 700,634 680 765,641 665 730,648 600 690,655 545 620,665 570 600,672 500 620,680 580 640,687 605 640,695 610 680,703 600 650,710 540 660,718 580 660,727 565 610,737 575 610,747 570 635,752 510 600,757 530 590,768 485 540,775 510 560,782 560 630,790 630 690,799 650 745,805 650 700,815 610 650,827 585 620,835 600 650,843 585 630,851 520 610,858 570 610,868 475 560,876 490 530,885 540 595,893 500 550,900 460 510,908 390 460,916 350 420,925 330 430,935 370 420,943 380 425,952 365 420,960 380 425,968 345 390,975 330 370,985 355 410,993 385 420,1002 370 410,1012 410 450,1020 290 400,1027 300 350,1034 300 400,1040 220 330,1047 250 300,1053 370 430,1060 345 390,1070 380 420,1077 300 430,1085 390 440,1095 370 420,1102 345 400,1111 360 410,1118 380 440,1128 430 490,1137 450 500,1144 465 560,1152 430 480,1160 355 400,1170 360 420,1175 380 460,1182 450 500,1190 505 560,1198 500 580,1206 540 610,1213 560 620,1220 530 570,1226 500 570,1232 545 570,1240 500 540,1247 440 490,1252 345 420,1260 350 420,1268 335 380,1277 345 380,1285 360 410,1293 365 400,1302 350 395,1310 270 370,1318 250 310,1325 210 260,1332 155 220,1340 130 190,1347 80 140,1353 50 120,1360 85 120,1367 105 160,1372 130 250,1378 200 270,1384 255 320,1391 280 350,1398 320 420,1406 360 420,1414 365 420,1420 400 450,1427 420 480,1432 500 550,1439 490 540,1445 400 500,1452 330 420,1457 300 350,1467 280 340,1476 290 340,1484 300 370,1490 285 330,1497 250 310,1505 300 350` },
  { ox: 1600, k: 1.4255, pts: `0 280 320,5 265 315,10 235 280,16 205 260,22 240 300,26 340 450,32 455 490,38 455 510,45 510 560,53 510 580,60 470 510,66 475 510,72 430 490,80 450 510,87 490 550,93 560 630,100 570 630,107 600 645,114 615 680,120 600 650,126 585 620,134 630 670,140 570 640,147 575 630,155 530 590,163 505 560,168 570 620,175 620 665,183 640 680,190 635 670,197 690 730,204 680 735,211 660 770,218 680 740,226 690 760,233 710 770,240 680 730,247 670 710,255 690 730,263 690 720,272 690 730,280 705 750,288 750 800,296 745 830,304 760 810,311 780 820,318 790 860,325 770 810,333 780 830,341 780 820,348 800 860,354 800 880,361 800 850,367 700 800,374 650 700,380 635 680,388 650 690,395 650 690,402 610 690,410 655 720,417 670 700,424 690 730,431 700 750,438 680 710,447 660 690,457 660 700,464 620 680,471 595 630,480 590 630,490 575 620,498 590 650,505 560 620,510 528 570,520 522 555,531 518 560,536 620 660,545 630 660,552 635 680,558 610 650,566 620 680,575 620 670,584 640 690,592 670 710,601 665 710,607 700 780,612 770 835,620 700 760,627 690 730,634 670 760,640 760 820,648 745 800,656 760 800,664 750 790,672 735 770,680 765 810,688 780 825,696 800 840,703 765 810,710 750 800,716 738 770,724 770 810,731 770 820,738 720 770,746 710 740,753 690 730,760 730 780,768 755 790,776 770 820,785 785 820,793 810 845,800 820 850,806 765 820,814 780 810,822 790 830,830 780 830,838 810 850,844 870 920,851 870 910,858 830 890,865 830 870,872 790 830,880 780 820,888 760 800,894 690 750,901 670 710,907 690 740,914 630 690,920 610 690,927 640 680,935 655 690,943 640 680,951 620 660,960 605 645,967 590 630,974 550 620,980 520 580,984 440 500,991 435 480,999 410 500,1004 450 500,1012 450 490,1020 445 485,1031 420 480,1040 455 500,1049 470 510,1055 550 600,1062 540 570,1070 550 580,1077 560 600,1085 540 580,1092 500 550,1099 465 520,1106 490 540,1114 490 530,1122 480 510,1129 460 500,1138 490 520,1148 490 525,1156 470 500,1164 465 510,1171 490 525,1177 460 510,1183 405 450,1190 410 460,1197 400 430,1207 390 430,1217 370 440,1226 380 430,1236 350 430,1243 430 490,1254 480 540,1260 445 490,1269 460 500,1275 430 480,1284 435 470,1291 370 450,1298 390 425,1306 380 425,1314 340 400,1320 375 430,1327 410 460,1335 395 430,1342 410 450,1350 400 440,1360 390 430,1370 385 410,1380 370 410,1385 325 370,1392 380 420,1400 400 440,1408 410 450,1417 420 450,1425 405 440,1433 400 430,1440 430 480,1445 490 530,1450 480 520,1456 450 480,1463 410 450,1471 390 430,1479 370 410,1487 375 400,1492 450 560,1498 550 590,1505 575 620,1513 590 630,1520 560 600,1527 570 620,1532 640 700,1536 720 780,1543 700 730,1550 680 710,1558 700 720,1566 665 710` },
  { ox: 2700, k: 1.375, pts: `0 680 710,6 685 715,11 700 780,17 620 690,23 530 600,28 560 600,36 570 610,44 590 630,49 600 660,56 600 640,62 640 690,67 650 710,73 630 660,80 615 670,87 520 610,92 545 600,97 560 620,103 550 600,110 545 590,120 540 580,130 560 580,140 545 580,148 530 590,158 550 590,165 590 640,173 590 630,178 580 620,184 550 600,192 570 610,202 570 620,208 590 620,214 560 610,221 610 650,227 620 670,236 625 660,244 640 690,250 610 650,256 570 605,262 560 590,270 560 590,275 440 520,283 445 490,290 410 470,298 450 500,304 400 460,311 395 425,320 345 420,328 335 380,337 350 390,344 375 420,351 370 430,358 365 420,364 345 385,372 350 380,380 360 380,384 380 470,390 475 500,398 480 510,406 480 530,413 500 560,420 520 590,428 560 590,436 555 590,443 560 610,450 560 595,460 530 570,468 515 550,478 490 540,487 520 560,496 515 545,506 505 540,515 490 530,521 470 520,529 500 530,538 510 560,543 550 610,550 590 640,556 620 680,563 610 650,574 590 630,584 595 620,594 600 640,600 560 600,608 520 570,618 470 530,627 480 530,636 465 500,645 480 520,654 460 500,662 490 540,669 445 490,675 500 570,682 570 620,690 620 700,698 635 670,706 640 690,714 620 650,722 610 640,730 590 640,736 660 710,742 670 720,748 640 680,754 645 680,762 655 695,772 660 710,780 660 700,788 640 670,795 630 660,803 650 710,808 720 780,815 740 800,822 740 790,830 780 800,838 790 840,846 740 790,853 745 780,860 735 765,867 790 850,874 790 850,880 830 880,886 890 970,892 910 990,900 935 970,908 945 990,912 1090 1150,918 1120 1165,924 1120 1160,931 1160 1230,938 1160 1200,945 1150 1200,953 1110 1170,960 1140 1180,967 1130 1170,976 1060 1150,983 1080 1110,990 1080 1110,996 1060 1110,1003 1010 1050,1010 995 1040,1017 970 1060,1024 970 1000,1033 968 1000,1041 1000 1040,1049 1005 1050,1055 1060 1120,1062 1120 1200,1070 1160 1230,1079 1190 1265,1086 1200 1240,1095 1200 1240,1104 1200 1250,1114 1230 1280,1120 1210 1240,1128 1180 1210,1137 1165 1220,1145 1155 1200,1155 1150 1190,1163 1140 1170,1172 1120 1170,1180 1180 1210,1188 1185 1210,1196 1150 1210,1200 1050 1120,1206 1010 1070,1212 1060 1110,1220 1060 1110,1228 1070 1100,1234 1080 1140,1240 1070 1120,1247 1130 1170,1257 1155 1190,1265 1180 1230,1274 1170 1230,1282 1240 1305,1290 1230 1290,1296 1200 1250,1303 1210 1250,1311 1230 1275,1319 1210 1240,1328 1190 1265,1335 1190 1225,1343 1190 1220,1352 1175 1210,1362 1180 1210,1372 1185 1210,1382 1185 1215,1390 1190 1240,1396 1240 1300,1403 1215 1250,1410 1240 1290,1418 1270 1315,1427 1265 1310` }
];
// Single-bar spikes: block, x, top, bottom.
const spikes = [[0,801,548,800],[0,1213,560,730],[0,940,380,558],[0,871,480,665],[0,1144,465,598],[0,1484,300,530],[0,1040,199,300],[0,1047,240,300],[0,672,475,620],[0,99,602,740],[0,549,700,808],[0,1308,235,370],[0,1077,265,430],[0,925,324,430],[0,119,800,950],[0,190,900,1082],[0,224,1035,1118],[0,307,790,887],[0,436,560,779],[0,1351,46,130],[0,1354,50,120],[0,576,441,510],[1,30,440,613],[1,250,700,802],[1,211,648,790],[1,315,790,1138],[1,386,650,788],[1,524,522,710],[1,635,635,750],[1,657,760,905],[1,728,780,895],[1,866,830,936],[1,1071,550,665],[1,976,560,652],[1,1003,450,542],[1,1342,410,694],[1,999,397,480],[1,1290,337,450],[1,1314,328,400],[1,14,197,270],[1,17,203,260],[1,610,770,848],[1,1384,324,380],[1,1490,352,500],[2,111,545,1355],[2,178,590,780],[2,976,1050,1192],[2,692,630,735],[2,442,570,622],[2,521,455,520],[2,670,434,490],[2,23,520,600],[2,87,515,600],[2,1017,964,1060],[2,909,945,1120],[2,384,370,490],[2,329,326,380],[2,1206,1006,1070],[2,1428,1263,1310]];
const py = y => 200 + y / 2.119;

const env = [];
price.forEach(b => b.pts.split(',').forEach(t => {
  const [x, h, l] = t.split(' ').map(Number);
  env.push([b.ox + x / b.k, py(h), py(l)]);
}));
const at = (pts, x) => {
  let i = 1;
  while (i < pts.length - 1 && pts[i][0] < x) i++;
  const a = pts[i - 1], b = pts[i], t = Math.max(0, Math.min(1, (x - a[0]) / (b[0] - a[0])));
  return a.slice(1).map((v, j) => v + (b[j + 1] - v) * t);
};
let bars = '';
for (let x = 541; x < 3742; x += 2) {
  const [h, l] = at(env, x), r = l - h;
  const top = Math.round(h + r * (rnd() * .6 - .2)), bot = Math.round(l - r * (rnd() * .55 - .2));
  bars += `M${x}.5 ${top}V${Math.max(bot, top + 5)}`;
}
spikes.forEach(([b, x, t, e]) => {
  const px = Math.round((price[b].ox + x / price[b].k - 541) / 2) * 2 + 541;
  bars += `M${px}.5 ${py(t)}V${py(e)}`;
});

// MACD histogram heights.
const macd = [
  { ox: 540, k: .9503, oy: 900, pts: `0 655,4 690,9 725,14 725,19 745,23 700,28 645,34 612,40 610,44 628,50 605,53 585,58 590,64 585,67 640,73 730,80 850,86 810,92 755,98 760,104 788,110 720,116 650,120 580,123 555,126 650,130 740,137 810,144 880,149 930,154 880,160 760,165 620,167 560,173 460,179 360,184 252,190 290,197 370,203 470,208 558,214 520,223 470,232 490,240 520,248 490,257 490,266 545,275 530,283 565,288 608,292 560,297 400,301 270,305 243,310 360,317 450,323 520,328 610,334 710,341 795,350 785,357 750,363 690,370 680,374 590,380 460,386 352,391 430,397 520,403 570,410 600,418 660,429 710,434 640,440 530,449 480,456 530,463 560,470 598,474 570,482 560,490 550,498 570,505 520,514 480,520 500,526 600,531 700,535 788,542 740,549 640,556 625,562 590,567 545,574 520,581 450,586 435,592 490,598 500,605 420,611 350,617 318,624 365,631 425,638 440,644 470,650 470,655 458,662 540,670 560,678 625,684 520,691 505,698 410,703 480,710 570,716 630,723 670,730 665,738 630,745 640,752 700,762 785,769 740,775 610,780 545,786 595,794 700,802 780,809 810,816 750,823 710,829 660,835 510,841 420,849 380,856 420,862 460,869 465,876 420,883 350,890 270,897 210,903 192,908 240,914 360,921 500,927 660,934 770,941 840,949 870,955 930,959 960,964 850,970 690,976 570,982 510,986 500,990 590,995 550,1001 515,1008 520,1014 480,1019 440,1024 540,1030 700,1036 820,1043 905,1049 850,1055 780,1062 745,1070 790,1078 850,1086 865,1093 820,1101 775,1108 720,1117 595,1122 640,1128 700,1136 730,1145 785,1153 775,1162 775,1170 700,1178 660,1187 635,1194 655,1201 690,1208 725,1217 795,1224 740,1232 700,1240 720,1248 690,1254 580,1260 450,1268 410,1274 400,1281 460,1288 510,1296 575,1303 560,1312 550,1320 500,1328 475,1335 460,1341 500,1348 440,1355 420,1361 430,1367 560,1375 650,1383 650,1390 660,1398 680,1408 710,1417 790,1425 740,1430 700,1437 755,1446 775,1454 700,1463 690,1472 705,1480 650` },
  { ox: 2100, k: .9011, oy: 880, pts: `0 640,6 670,12 695,18 640,27 580,33 620,40 665,48 720,55 762,63 715,73 705,81 720,89 795,96 750,101 690,107 640,114 560,121 495,128 440,134 430,140 475,148 487,156 498,164 485,170 410,177 342,184 370,192 405,199 450,207 510,214 600,221 690,233 750,240 710,246 635,255 620,264 598,273 620,283 610,292 640,300 575,311 528,320 535,327 565,333 545,340 680,349 725,358 690,366 650,374 600,381 565,389 615,398 685,406 640,415 620,425 580,432 610,440 670,447 690,455 670,466 760,474 730,481 640,489 592,496 760,503 870,508 900,513 880,519 960,524 1008,531 960,537 890,544 850,552 780,557 650,564 588,573 610,580 670,588 697,595 660,600 585,610 575,614 690,620 600,628 590,636 565,644 590,650 650,657 685,665 665,673 680,683 670,693 720,702 735,709 660,716 600,724 480,731 435,738 460,745 425,750 430,756 408,762 440,770 520,778 525,786 530,792 600,800 730,808 800,821 860,832 850,840 790,848 710,857 660,865 665,873 640,881 625,889 640,896 690,908 825,917 800,925 755,934 720,942 610,948 545,956 518,964 535,972 560,980 600,988 680,995 810,1003 860,1011 810,1018 745,1027 805,1035 780,1044 755,1052 750,1062 675,1070 740,1077 800,1084 840,1091 855,1098 800,1106 740,1113 770,1120 860,1130 940,1138 1000,1145 1090,1151 1150,1158 1100,1167 990,1175 860,1184 720,1193 670,1200 590,1208 545,1217 510,1225 550,1232 630,1240 790,1247 880,1253 915,1262 880,1270 850,1280 780,1290 710,1300 650,1308 600,1316 640,1324 665,1331 530,1338 498,1344 510,1352 550,1360 620,1368 740,1377 800,1385 850,1394 790,1403 750,1412 720,1420 670,1430 638,1440 645,1450 640,1458 710,1467 745,1473 768,1478 800` }
];
const hist = [];
macd.forEach(b => b.pts.split(',').forEach(t => {
  const [x, y] = t.split(' ').map(Number);
  hist.push([b.ox + x / b.k, b.oy + y / 3]);
}));
let cols = '', sig = '', win = [];
for (let x = 541; x < 3742; x += 2) {
  const y = at(hist, x)[0];
  cols += `M${x}.5 1099V${Math.round(y)}`;
  win.push(y);
  if (win.length > 9) win.shift();
  sig += `${sig ? 'L' : 'M'}${x} ${(win.reduce((a, b) => a + b) / win.length).toFixed(1)}`;
}

// Grid, axes and labels.
let vert = '', horiz = '';
for (let x = 603.5; x < 3742; x += 64) vert += `M${x} 210V930M${x} 934V1293`;
const levels = [0.7796, 0.7759, 0.7722, 0.7685, 0.7648, 0.7611, 0.7574, 0.7537, 0.75, 0.7463, 0.7426];
let labels = '';
levels.forEach((p, i) => {
  const y = Math.round(221 + i * 64.5);
  horiz += `M541 ${y}.5H3741`;
  labels += `<path d="M3743 ${y}.5h5" stroke="#fff"/><text x="3747" y="${y + 8}" textLength="67">${p.toFixed(5)}</text>`;
});
[['0.002626', 950], ['0.000000', 1106], ['-0.003069', 1289]].forEach(([t, y]) => labels += `<text x="3748" y="${y}">${t}</text>`);
'24 Aug 2017,28 Aug 22:00,31 Aug 14:00,5 Sep 06:00,7 Sep 22:00,12 Sep 14:00,15 Sep 06:00,19 Sep 22:00,22 Sep 14:00,27 Sep 06:00,29 Sep 22:00,4 Oct 14:00,9 Oct 06:00,11 Oct 22:00,16 Oct 14:00,19 Oct 06:00,23 Oct 22:00,26 Oct 14:00,31 Oct 06:00,2 Nov 22:00,7 Nov 15:00,10 Nov 07:00,14 Nov 23:00,17 Nov 15:00,22 Nov 07:00,24 Nov 23:00'.split(',').forEach((t, i) => {
  labels += `<path d="M${539.5 + i * 128} 1294v6" stroke="#fff"/><text x="${539 + i * 128}" y="1317">${t}</text>`;
});

// Calendar event flags: start, end, colour, text.
const W = '#f5f5f5', C = '#afeeee', P = '#ffc0cb';
const flags = [[2115,2127,W,'0'],[2127,2137,C,'0'],[2137,2141,P,''],[2141,2147,W,''],[2147,2163,C,'18'],[2163,2177,C,'0'],[2177,2186,C,'0'],[2186,2193,W,'1'],[2193,2198,P,''],[2198,2205,W,'1'],[2205,2211,C,'2'],[2211,2221,C,'0'],[2221,2238,P,'01'],[2238,2291,W,'16:30'],[2291,2294,C,''],[2294,2297,W,''],[2297,2301,C,''],[2301,2307,W,''],[2307,2320,C,'0'],[2320,2324,C,''],[2324,2327,W,''],[2327,2332,P,''],[2332,2340,P,'1'],[2340,2345,C,''],[2345,2369,W,'20:'],[2369,2372,W,''],[2372,2374,C,''],[2374,2377,W,''],[2377,2387,C,'1'],[2387,2391,C,''],[2391,2395,W,''],[2395,2417,W,'20:'],[2417,2421,W,''],[2421,2424,C,''],[2424,2428,W,''],[2428,2433,W,'1'],[2433,2440,W,'1'],[2440,2454,W,'20'],[2454,2470,C,'03'],[2470,2521,C,'12:44'],[2521,2525,W,''],[2525,2569,W,'15:00'],[2569,2616,P,'13:00'],[2616,2645,W,'13:0'],[2645,2657,W,'0'],[2657,2661,C,''],[2661,2712,C,'11:30'],[2713,2764,P,'13:00'],[2779,2782,W,''],[2782,2785,W,''],[2785,2810,C,'01:'],[2810,2813,C,''],[2813,2817,W,''],[2817,2822,C,'1'],[2822,2825,W,''],[2825,2835,W,'2'],[2835,2859,P,'02'],[2859,2862,W,''],[2862,2866,P,''],[2866,2875,C,'1'],[2875,2878,P,''],[2878,2930,C,'00:30']];
let ev = '';
flags.forEach(([a, b, c, t]) => {
  const tip = t.length > 4 && b - a > 48;
  ev += `<path d="M${a} 902H${b - (tip ? 3 : 0)}${tip ? `L${b} 914.5` : ''}L${b - (tip ? 3 : 0)} 927H${a}z" fill="${c}" stroke="#fff"/><path d="M${a}.5 901v29" stroke="#000"/><path d="M${a + 1.5} 927v3" stroke="#fff"/>`;
  if (t) ev += `<svg class="flag" x="${a}" y="900" width="${b - a}" height="30" viewBox="0 0 ${b - a} 30" style="overflow:hidden"><text x="2" y="21" fill="#000">${t}</text></svg>`;
});

document.getElementById('plot').innerHTML = `
<rect x="537" y="206" width="3301" height="1121" fill="#000"/>
<g shape-rendering="crispEdges" fill="none">
<path d="${vert}" stroke="#778899" stroke-dasharray="4 3"/>
<path d="${horiz}" stroke="#778899" stroke-dasharray="3 2"/>
<path d="${cols}" stroke="#c0c0c0"/>
<path d="M541 1099H3742" stroke="#778899" stroke-dasharray="3 2"/>
<path d="${bars}" stroke="#00ff00"/>
<path d="M541 839.5H3742" stroke="#778899"/>
<path d="M540.5 1294V208.500H3742.5V1294M540 930.5H3742M540 932.5H3742M540 1293.5H3742" stroke="#fff"/>
<path d="${sig}" stroke="#ff0000" stroke-dasharray="3 4"/>
</g>
<rect x="541" y="936" width="308" height="22" fill="#000"/>
<text x="543" y="954" textLength="305">MACD(12,26,9) -0.000696 -0.000487</text>
${labels}${ev}
<rect x="3745" y="828" width="78" height="23" fill="#778899"/><text x="3750" y="846" fill="#000" textLength="67">0.74416</text>`;
```
